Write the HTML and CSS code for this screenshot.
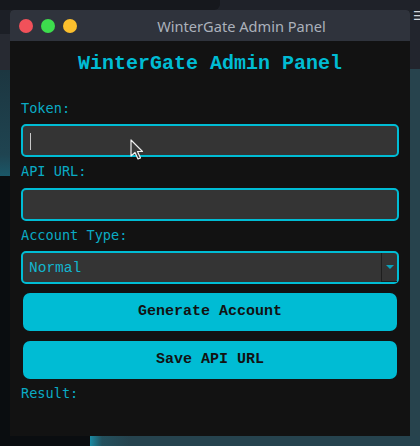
FILE: index.html
```html
<!DOCTYPE html>
<html>
<head>
<meta charset="utf-8">
<title>WinterGate Admin Panel</title>
<link rel="stylesheet" href="styles.css">
</head>
<body>
<div class="desktop">
  <div class="bg bg-top"></div>
  <div class="bg bg-top-left"></div>
  <div class="bg bg-left-a"></div>
  <div class="bg bg-left-b"></div>
  <div class="bg bg-left-c"></div>
  <div class="bg bg-right-a"></div>
  <div class="bg bg-right-b"></div>
  <div class="bg bg-bottom"></div>
  <div class="menu-glyph">☰</div>

  <div class="window">
    <div class="titlebar">
      <div class="lights">
        <span class="light red"></span>
        <span class="light green"></span>
        <span class="light yellow"></span>
      </div>
      <div class="title">WinterGate Admin Panel</div>
    </div>
    <div class="content">
      <h1 class="heading">WinterGate Admin Panel</h1>
      <label class="label">Token:</label>
      <div class="input"><span class="caret"></span></div>
      <label class="label">API URL:</label>
      <div class="input"></div>
      <label class="label">Account Type:</label>
      <div class="select">
        <span class="select-text">Normal</span>
        <span class="select-arrow"><svg width="8" height="4" viewBox="0 0 8 4"><path d="M0 0 H8 L4 4 Z" fill="#0aa3bb"/></svg></span>
      </div>
      <button class="btn btn-first">Generate Account</button>
      <button class="btn btn-second">Save API URL</button>
      <label class="label">Result:</label>
    </div>
  </div>

  <svg class="cursor" width="14" height="22" viewBox="0 0 14 22"><path d="M1 1 L1 17 L5 13.5 L8 20 L10.5 19 L7.5 12.5 L12.5 12.5 Z" fill="#3a3a3a" stroke="#f0f0f0" stroke-width="1.2" stroke-linejoin="round"/></svg>
</div>
</body>
</html>
```
FILE: styles.css
```css
html, body {
  margin: 0;
  padding: 0;
}
body {
  width: 420px;
  height: 446px;
  overflow: hidden;
  background: #0a0d10;
}
.desktop {
  position: relative;
  width: 420px;
  height: 446px;
  overflow: hidden;
}
.bg { position: absolute; }
.bg-top { left: 0; top: 0; width: 420px; height: 12px; background: #1f2229; }
.bg-top-left { left: 0; top: 0; width: 220px; height: 10px; background: #16181d; border-bottom-right-radius: 6px; }
.bg-left-a { left: 0; top: 10px; width: 10px; height: 24px; background: #1c1f26; }
.bg-left-b { left: 0; top: 34px; width: 10px; height: 36px; background: #272a32; }
.bg-left-c { left: 0; top: 70px; width: 10px; height: 106px; background: linear-gradient(180deg, #1c3640 0%, #1f4451 80%, #1a5768 100%); }
.bg-right-a { left: 410px; top: 12px; width: 10px; height: 57px; background: #22252d; }
.bg-right-b { left: 410px; top: 69px; width: 10px; height: 377px; background: #27434d; }
.bg-bottom { left: 90px; top: 436px; width: 330px; height: 10px; background: linear-gradient(90deg, #1a8aa3 0px, #23505d 12px, #26434e 40px); }
.menu-glyph {
  position: absolute;
  left: 413px;
  top: 9px;
  width: 7px;
  overflow: hidden;
  font: 12px/14px "DejaVu Sans", sans-serif;
  color: #d0d4da;
}

.window {
  position: absolute;
  left: 10px;
  top: 10px;
  width: 400px;
  height: 426px;
  background: #121212;
  border-radius: 4px 4px 0 0;
  overflow: hidden;
}
.titlebar {
  display: flex;
  align-items: center;
  height: 31px;
  background: #2f333c;
}
.lights {
  display: flex;
  gap: 8px;
  padding-left: 9px;
  padding-right: 16px;
}
.light {
  width: 14px;
  height: 14px;
  border-radius: 50%;
}
.red { background: #f1515a; }
.green { background: #3ddd4d; }
.yellow { background: #fbbf2d; }
.title {
  flex: 1;
  padding-right: 20px;
  text-align: center;
  font: 14.6px "Noto Sans", sans-serif;
  color: #abb1bb;
}

.content {
  display: flex;
  flex-direction: column;
  padding: 0 11px;
}
.heading {
  margin: 10.5px 0 18px;
  font: bold 20px/24px "Liberation Mono", monospace;
  color: #00bcd4;
  text-align: center;
}
.label {
  display: block;
  margin: 6px 0 8.5px;
  font: 13.6px/16px "DejaVu Sans Mono", monospace;
  color: #0aabc4;
}
.input {
  position: relative;
  box-sizing: border-box;
  height: 33px;
  border: 2px solid #00bcd4;
  border-radius: 5px;
  background: #343434;
}
.caret {
  position: absolute;
  left: 7px;
  top: 7px;
  width: 1px;
  height: 17px;
  background: #c8c8c8;
}
.select {
  display: flex;
  align-items: stretch;
  box-sizing: border-box;
  height: 33px;
  border: 2px solid #00bcd4;
  border-radius: 5px;
  background: #343434;
}
.select-text {
  flex: 1;
  display: flex;
  align-items: center;
  padding-left: 6px;
  font: 14.5px "Liberation Mono", monospace;
  color: #12b6cf;
}
.select-arrow {
  display: flex;
  align-items: center;
  justify-content: center;
  width: 15px;
  border-left: 1px solid #1e1e1e;
  border-bottom: 1px solid #1e1e1e;
}
.btn {
  display: block;
  box-sizing: border-box;
  height: 38px;
  margin: 0 2px;
  border: none;
  border-radius: 7px;
  background: #00bcd4;
  font: bold 15px "Liberation Mono", monospace;
  color: #121212;
  padding: 0;
}
.btn-first { margin-top: 8.5px; }
.btn-second { margin-top: 10px; }

.cursor {
  position: absolute;
  left: 130px;
  top: 139px;
}
```
